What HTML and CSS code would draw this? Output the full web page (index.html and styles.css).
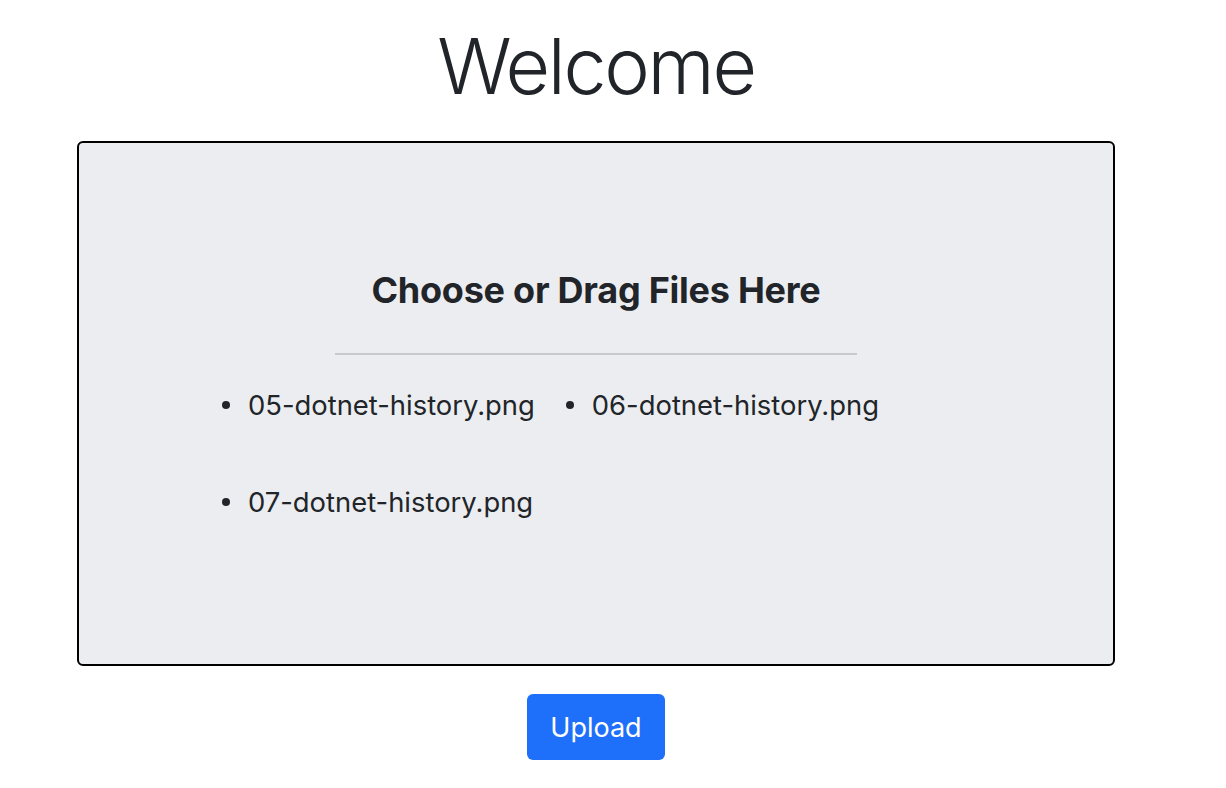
FILE: index.html
```html
<!DOCTYPE html>
<html lang="en">
<head>
<meta charset="utf-8">
<title>Welcome</title>
<link rel="stylesheet" href="styles.css">
</head>
<body>
<div class="page">
  <h1 class="title">Welcome</h1>
  <div class="dropzone">
    <h2 class="drop-title">Choose or Drag Files Here</h2>
    <hr class="divider">
    <ul class="files">
      <li class="file">05-dotnet-history.png</li>
      <li class="file">06-dotnet-history.png</li>
      <li class="file">07-dotnet-history.png</li>
    </ul>
  </div>
  <div class="actions">
    <button class="btn-upload" type="button">Upload</button>
  </div>
</div>
</body>
</html>
```

FILE: styles.css
```css
html, body {
  margin: 0;
  padding: 0;
  background: #ffffff;
}
body {
  font-family: Inter, "Noto Sans", "Liberation Sans", sans-serif;
  color: #212529;
}
.page {
  width: 1192px;
  display: flex;
  flex-direction: column;
  align-items: center;
}
.title {
  margin: 18px 0 27px;
  font-size: 77px;
  font-weight: 300;
  line-height: 96px;
  letter-spacing: -2.3px;
}
.dropzone {
  box-sizing: border-box;
  width: 1038px;
  height: 525px;
  border: 2px solid #000;
  border-radius: 6px;
  background: #ecedf0;
  display: flex;
  flex-direction: column;
  align-items: center;
  padding-top: 125px;
}
.drop-title {
  margin: 0;
  font-size: 36px;
  font-weight: 700;
  line-height: 44px;
  letter-spacing: -0.25px;
}
.divider {
  width: 522px;
  margin: 41px 0 0;
  border: 0;
  border-top: 2px solid #c8c9cc;
}
.files {
  list-style: none;
  align-self: stretch;
  margin: 34px 0 0 169px;
  padding: 0;
  display: flex;
  flex-wrap: wrap;
  column-gap: 57px;
  row-gap: 65px;
}
.file {
  position: relative;
  font-size: 27.4px;
  line-height: 32px;
}
.file::before {
  content: "";
  position: absolute;
  left: -26px;
  top: 12px;
  width: 8px;
  height: 8px;
  border-radius: 50%;
  background: #212529;
}
.actions {
  margin-top: 28px;
}
.btn-upload {
  width: 138px;
  height: 66px;
  border: 0;
  border-radius: 6px;
  background: #1e6ff9;
  color: #fff;
  font-family: inherit;
  font-size: 27px;
  font-weight: 400;
  padding: 0;
}
```
